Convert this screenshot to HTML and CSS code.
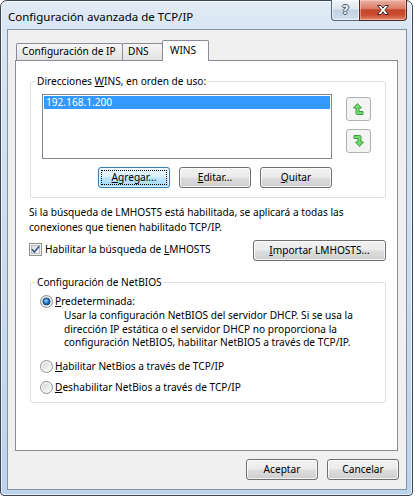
FILE: index.html
```html
<!DOCTYPE html>
<html lang="es">
<head>
<meta charset="utf-8">
<title>Configuración avanzada de TCP/IP</title>
<link rel="stylesheet" href="styles.css">
</head>
<body>
<div class="window">
  <div class="titlebar">
    <span class="title">Configuración avanzada de TCP/IP</span>
    <div class="caption">
      <div class="cap-btn cap-help"><span class="help-glyph">?</span></div>
      <div class="cap-btn cap-close">
        <svg width="14" height="12" viewBox="0 0 14 12"><path d="M1.5 1.5H5L7 4.2L9 1.5H12.5L8.8 6L12.5 10.5H9L7 7.8L5 10.5H1.5L5.2 6Z" fill="#fff" stroke="#4a2c26" stroke-width="1" stroke-linejoin="round"/></svg>
      </div>
    </div>
  </div>
  <div class="client">
    <div class="tabs">
      <div class="tab tab-ip">Configuración de IP</div>
      <div class="tab tab-dns">DNS</div>
      <div class="tab tab-wins active">WINS</div>
    </div>
    <div class="panel">
      <fieldset class="group group-wins">
        <legend>Direcciones <u>W</u>INS, en orden de uso:</legend>
        <div class="wins-body">
          <div class="wins-left">
            <div class="listbox">
              <div class="item selected">192.168.1.200</div>
            </div>
            <div class="btn-row">
              <button class="btn default"><span class="focus"><u>A</u>gregar...</span></button>
              <button class="btn"><u>E</u>ditar...</button>
              <button class="btn"><u>Q</u>uitar</button>
            </div>
          </div>
          <div class="arrows">
            <div class="arrow-btn">
              <svg width="11" height="12" viewBox="0 0 11 12"><path d="M4.5 0.5L8.5 5H6V8.5H10V11.5H4.2Q3 11.5 3 10.3V5H0.5Z" fill="#74d874" stroke="#3a9e3a" stroke-width="1" stroke-linejoin="round"/></svg>
            </div>
            <div class="arrow-btn">
              <svg width="11" height="12" viewBox="0 0 11 12"><path d="M6.5 11.5L2.5 7H5V3.5H1V0.5H6.8Q8 0.5 8 1.7V7H10.5Z" fill="#74d874" stroke="#3a9e3a" stroke-width="1" stroke-linejoin="round"/></svg>
            </div>
          </div>
        </div>
      </fieldset>

      <p class="note">Si la búsqueda de LMHOSTS está habilitada, se aplicará a todas las<br>conexiones que tienen habilitado TCP/IP.</p>

      <div class="lm-row">
        <label class="check-row">
          <svg class="checkbox" width="13" height="13" viewBox="0 0 13 13">
            <defs><linearGradient id="cbfill" x1="0" y1="0" x2="1" y2="1"><stop offset="0" stop-color="#d6d8db"/><stop offset="1" stop-color="#fbfbfb"/></linearGradient></defs>
            <rect x="0.5" y="0.5" width="12" height="12" fill="#f5f5f5" stroke="#8e8f8f"/>
            <rect x="2.5" y="2.5" width="8" height="8" fill="url(#cbfill)" stroke="#b9bcc0"/>
            <path d="M3 6.3L5.4 9L10.2 3.2" fill="none" stroke="#3c5688" stroke-width="1.7"/>
          </svg>
          <span>Habilitar la búsqueda de <u>L</u>MHOSTS</span>
        </label>
        <button class="btn btn-import"><u>I</u>mportar LMHOSTS...</button>
      </div>

      <fieldset class="group group-nb">
        <legend>Configuración de NetBIOS</legend>
        <div class="nb-body">
          <label class="radio-row">
            <svg class="radio" width="13" height="13" viewBox="0 0 13 13">
              <defs>
                <radialGradient id="rsel" cx="0.45" cy="0.4" r="0.6"><stop offset="0" stop-color="#a8dcfb"/><stop offset="0.5" stop-color="#2d83cc"/><stop offset="1" stop-color="#0f3c70"/></radialGradient>
                <linearGradient id="rbg1" x1="0" y1="0" x2="1" y2="1"><stop offset="0" stop-color="#dedede"/><stop offset="1" stop-color="#fafafa"/></linearGradient>
              </defs>
              <circle cx="6.5" cy="6.5" r="6" fill="url(#rbg1)" stroke="#8e8f8f"/>
              <circle cx="6.5" cy="6.5" r="3.6" fill="url(#rsel)" stroke="#1b4677" stroke-width="0.8"/>
            </svg>
            <span><u>P</u>redeterminada:</span>
          </label>
          <p class="nb-desc">Usar la configuración NetBIOS del servidor DHCP. Si se usa la<br>dirección IP estática o el servidor DHCP no proporciona la<br>configuración NetBIOS, habilitar NetBIOS a través de TCP/IP.</p>
          <label class="radio-row r2">
            <svg class="radio" width="13" height="13" viewBox="0 0 13 13">
              <defs><linearGradient id="rbg2" x1="0" y1="0" x2="1" y2="1"><stop offset="0" stop-color="#d4d4d4"/><stop offset="1" stop-color="#fbfbfb"/></linearGradient></defs>
              <circle cx="6.5" cy="6.5" r="6" fill="#f4f4f4" stroke="#8e8f8f"/>
              <circle cx="6.5" cy="6.5" r="4" fill="url(#rbg2)"/>
            </svg>
            <span><u>H</u>abilitar NetBios a través de TCP/IP</span>
          </label>
          <label class="radio-row r3">
            <svg class="radio" width="13" height="13" viewBox="0 0 13 13">
              <circle cx="6.5" cy="6.5" r="6" fill="#f4f4f4" stroke="#8e8f8f"/>
              <circle cx="6.5" cy="6.5" r="4" fill="url(#rbg2)"/>
            </svg>
            <span><u>D</u>eshabilitar NetBios a través de TCP/IP</span>
          </label>
        </div>
      </fieldset>
    </div>
    <div class="footer">
      <button class="btn">Aceptar</button>
      <button class="btn">Cancelar</button>
    </div>
  </div>
</div>
</body>
</html>
```

FILE: styles.css
```css
* { box-sizing: border-box; }
html, body { margin: 0; padding: 0; background: #fff; }
body {
  font-family: "Noto Sans", "Open Sans", sans-serif;
  font-size: 10.15px;
  color: #000;
}
u { text-decoration: underline; text-underline-offset: 1px; }

.window {
  width: 413px;
  height: 496px;
  border: 1px solid #3e4855;
  border-radius: 7px 7px 4px 4px;
  background: linear-gradient(180deg, #e3ecf6 0%, #d7e5f4 6%, #c8dbef 60%, #bcd3ec 100%);
  padding: 0 5px 5px 6px;
  display: flex;
  flex-direction: column;
  box-shadow: inset 0 0 0 1px rgba(255, 255, 255, 0.6);
}

.titlebar {
  height: 28px;
  flex: none;
  display: flex;
  justify-content: space-between;
  align-items: flex-start;
}
.title {
  font-size: 11.5px;
  line-height: 16px;
  margin: 8px 0 0 1px;
  white-space: nowrap;
}
.caption { display: flex; margin-top: -1px; }
.cap-btn {
  height: 21px;
  display: flex;
  align-items: center;
  justify-content: center;
}
.cap-help {
  width: 28px;
  border: 1px solid #5a6676;
  border-top: 0;
  border-right: 0;
  border-radius: 0 0 0 4px;
  background: linear-gradient(180deg, #f1f5fa 0%, #dde6f0 45%, #c3d2e3 50%, #cbd9e9 85%, #dae6f2 100%);
  box-shadow: inset 0 0 0 1px rgba(255, 255, 255, 0.5);
}
.help-glyph {
  font-family: "DejaVu Sans", sans-serif;
  font-weight: bold;
  font-size: 12px;
  line-height: 12px;
  color: #eef2f7;
  text-shadow: 1px 0 #4a5666, -1px 0 #4a5666, 0 1px #4a5666, 0 -1px #4a5666;
}
.cap-close {
  width: 48px;
  border: 1px solid #4c2a24;
  border-top: 0;
  border-radius: 0 0 4px 0;
  background: linear-gradient(180deg, #eab1a4 0%, #dc7d68 42%, #c5452c 50%, #cb4e33 75%, #e08b70 100%);
  box-shadow: inset 0 0 0 1px rgba(255, 220, 210, 0.45);
}

.client {
  flex: 1;
  border: 1px solid #8592a3;
  background: #f0f0f0;
  padding: 10px 8px 9px 7px;
  display: flex;
  flex-direction: column;
}

.tabs {
  height: 20px;
  flex: none;
  display: flex;
  align-items: flex-end;
  padding-left: 1px;
}
.tab {
  height: 17px;
  border: 1px solid #898c95;
  border-bottom: 0;
  border-radius: 2px 2px 0 0;
  background: linear-gradient(180deg, #f5f5f5 0%, #ececec 50%, #e2e2e2 100%);
  line-height: 15px;
  padding-left: 5px;
  white-space: nowrap;
}
.tab + .tab { margin-left: -1px; }
.tab-ip { width: 107px; }
.tab-dns { width: 41px; }
.tab-wins { width: 47px; }
.tab.active {
  height: 21px;
  margin-bottom: -1px;
  background: #fff;
  position: relative;
  z-index: 1;
  padding-left: 7px;
  line-height: 18px;
}

.panel {
  height: 391px;
  flex: none;
  border: 1px solid #898c95;
  background: #fff;
}

.group {
  border: 1px solid #d5dfe5;
  border-radius: 3px;
  margin: 12px 11px 0 14px;
  min-width: 0;
}
.group legend {
  line-height: 16px;
  padding: 0 2px;
  margin-left: 4px;
  white-space: nowrap;
}
.group-wins { padding: 5px 0 9px 0; }
.wins-body {
  display: flex;
  align-items: flex-start;
  margin-left: 11px;
}
.listbox {
  width: 290px;
  height: 65px;
  border: 1px solid #828790;
  background: #fff;
  padding: 1px;
}
.item {
  height: 13px;
  line-height: 13px;
  padding-left: 2px;
}
.item.selected { background: #3399ff; color: #fff; }

.btn-row {
  display: flex;
  justify-content: flex-end;
  gap: 9px;
  margin-top: 8px;
}
.arrows {
  display: flex;
  flex-direction: column;
  gap: 8px;
  margin: 3px 0 0 14px;
}
.arrow-btn {
  width: 25px;
  height: 24px;
  border: 1px solid #adb2b5;
  border-radius: 3px;
  background: #f4f4f4;
  display: flex;
  align-items: center;
  justify-content: center;
}
.arrow-btn svg { margin-left: -1px; }

.btn {
  width: 72px;
  height: 21px;
  padding: 0;
  margin: 0;
  font: inherit;
  color: #000;
  border: 1px solid #707070;
  border-radius: 3px;
  background: linear-gradient(180deg, #f2f2f2 0%, #ebebeb 48%, #dddddd 52%, #cfcfcf 100%);
  box-shadow: inset 0 0 0 1px rgba(255, 255, 255, 0.75);
  display: flex;
  align-items: center;
  justify-content: center;
  line-height: 13px;
}
.btn.default {
  border-color: #3c7fb1;
  background: linear-gradient(180deg, #eaf6fd 0%, #d9f0fc 48%, #bee6fd 52%, #a7d9f5 100%);
  box-shadow: inset 0 0 0 1px rgba(255, 255, 255, 0.6), 0 0 1px 0 #6fb6e6;
}
.focus {
  outline: 1px dotted #000;
  outline-offset: 0;
  width: 64px;
  height: 13px;
  display: flex;
  align-items: center;
  justify-content: center;
}

.note {
  margin: 7px 0 0 13px;
  line-height: 15px;
  white-space: nowrap;
}

.lm-row {
  margin: 5px 11px 0 13px;
  height: 21px;
  display: flex;
  align-items: center;
  justify-content: space-between;
}
.check-row {
  display: flex;
  align-items: center;
  gap: 3px;
  line-height: 15px;
  white-space: nowrap;
  margin-top: -2px;
}
.checkbox, .radio { flex: none; display: block; }
.btn-import { width: 133px; }

.group-nb { margin-top: 13px; padding: 4px 0 7px 0; }
.nb-body { margin-left: 9px; }
.radio-row {
  display: flex;
  align-items: center;
  gap: 2px;
  line-height: 15px;
  white-space: nowrap;
}
.nb-desc {
  margin: 0 0 0 24px;
  line-height: 13.5px;
  white-space: nowrap;
}
.radio-row.r2 { margin-top: 9px; }
.radio-row.r3 { margin-top: 6px; }

.footer {
  flex: none;
  margin: 8px -1px 0 0;
  display: flex;
  justify-content: flex-end;
  gap: 9px;
}
```
